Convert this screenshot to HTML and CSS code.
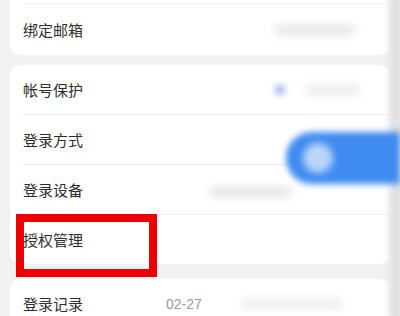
FILE: index.html
```html
<!DOCTYPE html>
<html lang="zh-CN">
<head>
<meta charset="utf-8">
<link rel="stylesheet" href="styles.css">
</head>
<body>
<div class="page">
  <div class="card card-first">
    <div class="stub"></div>
    <div class="row row-tall">
      <span class="label">绑定邮箱</span>
      <span class="blur-text blur-wide"></span>
    </div>
  </div>
  <div class="card">
    <div class="row">
      <span class="label">帐号保护</span>
      <span class="blur-dot"></span>
      <span class="blur-text blur-short"></span>
    </div>
    <div class="row">
      <span class="label">登录方式</span>
    </div>
    <div class="row">
      <span class="label">登录设备</span>
      <span class="blur-shadow"></span>
    </div>
    <div class="row row-last">
      <span class="label">授权管理</span>
    </div>
  </div>
  <div class="card card-last">
    <div class="row row-last">
      <span class="label">登录记录</span>
      <span class="date">02-27</span>
      <span class="blur-text blur-record"></span>
    </div>
  </div>
  <div class="edge"></div>
  <div class="pill"><span class="knob"></span></div>
  <div class="highlight"></div>
</div>
</body>
</html>
```
FILE: styles.css
```css
html, body {
  margin: 0;
  padding: 0;
  background: #f2f2f2;
  font-family: "Noto Sans CJK SC", "Noto Sans", sans-serif;
  overflow: hidden;
}
.page {
  position: relative;
  width: 400px;
  height: 316px;
  padding: 0 10px;
  box-sizing: border-box;
  display: flex;
  flex-direction: column;
  overflow: hidden;
}
.card {
  background: #ffffff;
  border-radius: 10px;
  padding-left: 13px;
}
.card-first {
  border-radius: 0 0 10px 10px;
}
.card + .card {
  margin-top: 10px;
}
.card-last {
  margin-top: 15px !important;
}
.stub {
  height: 3px;
  border-bottom: 1px solid #f1f1f1;
}
.row {
  height: 49px;
  border-bottom: 1px solid #eeeeee;
  display: flex;
  align-items: center;
  padding-right: 10px;
}
.row-tall {
  height: 51px;
  border-bottom: none;
}
.row-last {
  border-bottom: none;
}
.label {
  font-size: 15px;
  color: #2e2e2e;
  line-height: 1;
}
.date {
  margin-left: 83px;
  font-size: 14px;
  color: #9a9a9a;
  font-family: "Liberation Sans", "Noto Sans", sans-serif;
}
.blur-text {
  display: block;
  height: 10px;
  background: #e4e4e4;
  filter: blur(5px);
  border-radius: 5px;
}
.blur-wide {
  margin-left: auto;
  margin-right: 25px;
  width: 80px;
}
.blur-dot {
  margin-left: auto;
  width: 10px;
  height: 10px;
  border-radius: 50%;
  background: #9fb4f2;
  filter: blur(3px);
}
.blur-short {
  margin-left: 20px;
  margin-right: 20px;
  width: 55px;
  background: #ececec;
}
.blur-shadow {
  margin-left: auto;
  margin-right: 90px;
  margin-top: 4px;
  width: 80px;
  height: 8px;
  background: #dddddd;
  filter: blur(5px);
}
.blur-record {
  margin-left: 40px;
  width: 100px;
  background: #ececec;
}
.pill {
  position: absolute;
  left: 286px;
  top: 132px;
  width: 114px;
  height: 52px;
  border-radius: 26px 0 0 26px;
  background: #3f8bf0;
  filter: blur(3px);
}
.knob {
  position: absolute;
  left: 17px;
  top: 11px;
  width: 30px;
  height: 30px;
  border-radius: 50%;
  background: #bcd6fb;
  filter: blur(2px);
}
.edge {
  position: absolute;
  right: 0;
  top: 0;
  width: 16px;
  height: 316px;
  background: linear-gradient(to right, rgba(226,226,226,0), #e2e2e2 70%);
}
.highlight {
  position: absolute;
  left: 16px;
  top: 214px;
  width: 141px;
  height: 63px;
  box-sizing: border-box;
  border: 8px solid #ee0000;
}
```
